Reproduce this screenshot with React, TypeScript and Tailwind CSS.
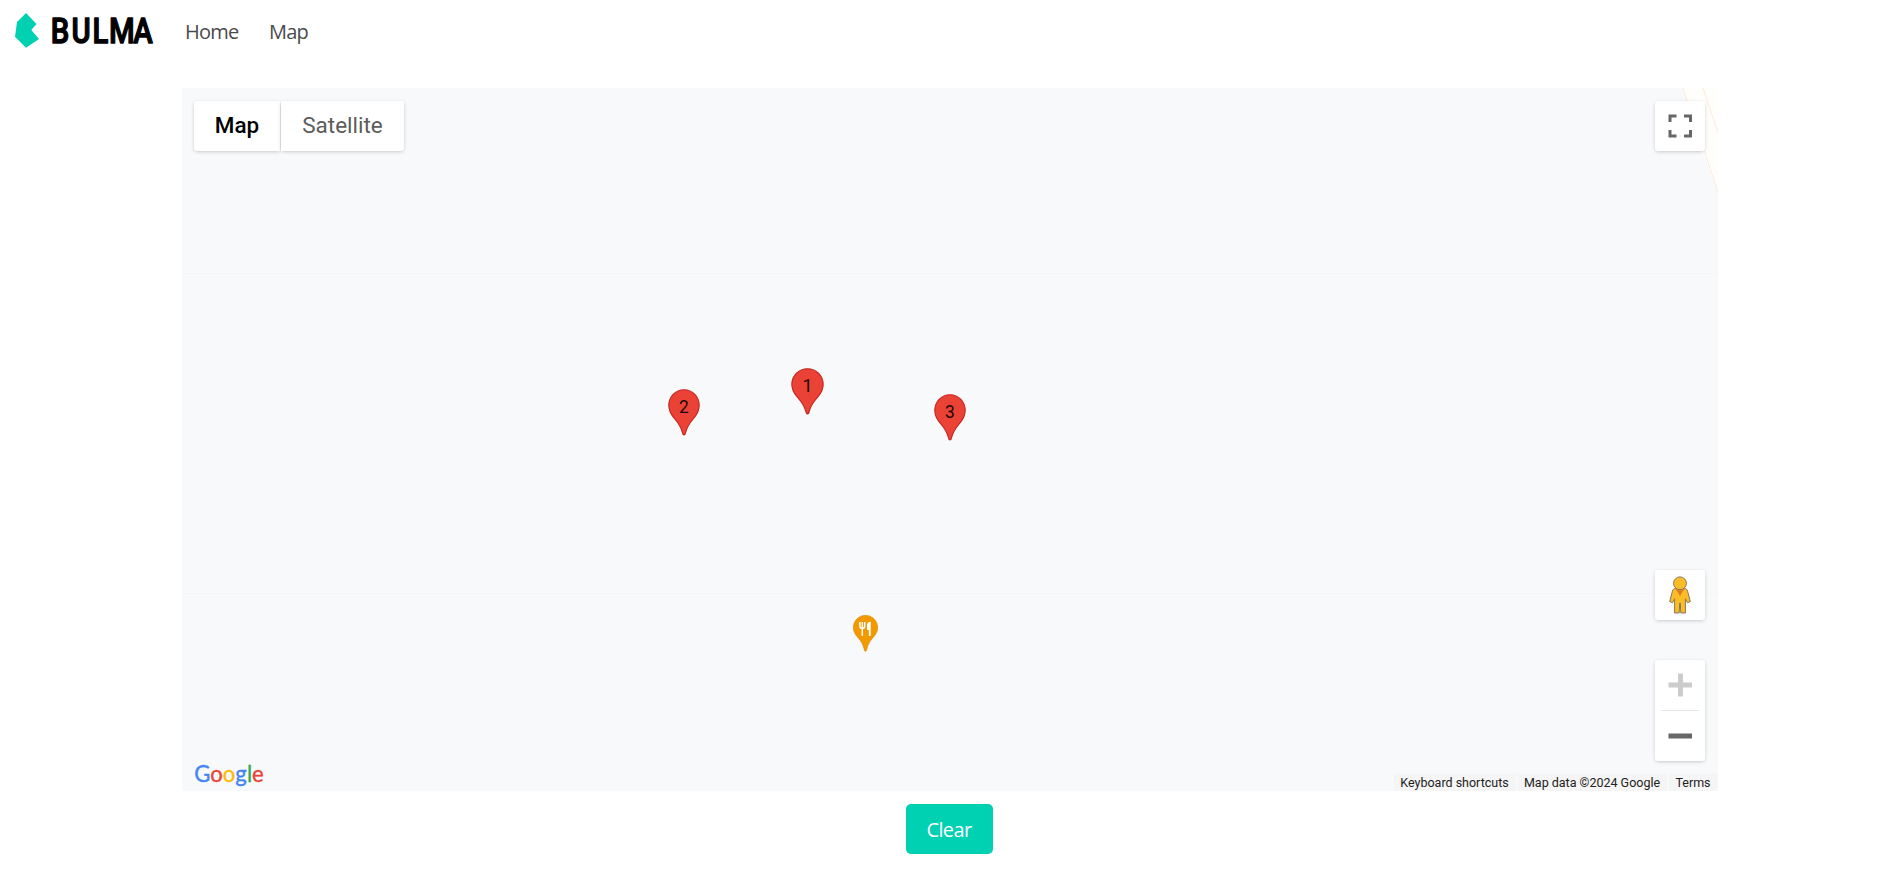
import type { ReactNode } from "react";

function BulmaLogo() {
  return (
    <svg width="165" height="60" viewBox="0 0 165 60" className="block" role="img" aria-label="Bulma">
      <path d="M26 13L36.5 24L31.3 30L39 39L26 47.7L15 36.7L17 22Z" fill="#00d1b2" />
      <text
        x="59.8 84.1 108.8 128.2 156.9"
        y="42.8"
        transform="scale(.85 1)"
        fill="#000"
        stroke="#000"
        strokeWidth="1.3"
        strokeLinejoin="round"
        className="font-[Roboto,sans-serif] text-[34.5px] font-medium"
      >
        BULMA
      </text>
    </svg>
  );
}

function Navbar() {
  return (
    <nav className="flex h-[65px] bg-white pb-0.5 text-[20px] leading-[30px] tracking-[-0.04em] text-[#4a4a4a]">
      <a className="block w-[170px]">
        <BulmaLogo />
      </a>
      <a className="flex w-[84px] items-center pl-[15px]">Home</a>
      <a className="flex items-center px-[15px]">Map</a>
    </nav>
  );
}

const shadow = "shadow-[0_1px_4px_-1px_rgba(0,0,0,0.3)]";

function PinShape({ left, top, width, label }: { left: string; top: string; width: number; label: string }) {
  return (
    <div className={`absolute ${left} ${top}`}>
      <svg width={width} height="47" viewBox="0 0 33 47" preserveAspectRatio="none">
        <path
          d="M16.5 .8C7.6.8.8 7.7.8 16.3c0 4.7 1.9 8.5 4.9 12 3.6 4.2 7.5 8.1 9 14.9.4 2 .7 2.8 1.8 2.8s1.4-.8 1.8-2.8c1.5-6.8 5.4-10.7 9-14.9 3-3.5 4.9-7.3 4.9-12C32.200 7.700 25.400.8 16.500.8Z"
          fill="#ea4335"
          stroke="#c5221f"
          strokeWidth="1.1"
        />
        <text x="16.500" y="24" textAnchor="middle" fill="#1d0705" className="font-[Roboto,sans-serif] text-[18px]">
          {label}
        </text>
      </svg>
    </div>
  );
}

function RestaurantPin() {
  return (
    <svg className="absolute left-[671px] top-[527px]" width="25" height="37" viewBox="0 0 25 37">
      <path
        d="M12.500.4C5.700.4.4 5.800.4 12.500c0 3.800 1.600 6.600 3.900 9.300 2.800 3.300 5.500 6.300 6.700 11.800.3 1.600.5 2.700 1.500 2.700s1.200-1.100 1.500-2.700c1.200-5.500 3.900-8.500 6.700-11.800 2.300-2.700 3.900-5.500 3.900-9.300C24.600 5.800 19.300.4 12.500.4Z"
        fill="#f29900"
        stroke="#e08a00"
        strokeWidth=".7"
      />
      <path
        d="M6.900 7v4.200c0 1.500 1 2.300 2.400 2.300s2.400-.8 2.400-2.300V7M9.300 7v14"
        fill="none"
        stroke="#fff"
        strokeWidth="1.500"
      />
      <path d="M14 10.500c0-2.400 1-3.800 3.700-3.800V21h-1.900v-6H14Z" fill="#fff" />
    </svg>
  );
}

function Pegman() {
  return (
    <svg width="24" height="38" viewBox="0 0 24 38" className="mr-px">
      <path
        d="M7.500 12.500h9c1.700 0 2.700 1 3.100 2.700l2.700 10.300-2.800 1.300-2.100-4V37h-4.600l-.5-10h-.6l-.5 10H6.600V22.800l-2.100 4-2.800-1.300 2.700-10.300c.4-1.700 1.400-2.700 3.100-2.700Z"
        fill="#fbbc24"
        stroke="#837865"
        strokeWidth="1"
      />
      <path d="M7.600 12.800h8.800L12 20Z" fill="#e37c22" />
      <circle cx="12" cy="7.300" r="6.400" fill="#fbbc24" stroke="#837865" strokeWidth="1" />
    </svg>
  );
}

function GoogleWordmark() {
  return (
    <svg width="80" height="34" viewBox="0 0 80 34" className="block">
      <text
        x=".3"
        y="25"
        textLength="69.5"
        lengthAdjust="spacingAndGlyphs"
        strokeWidth=".4"
        className="font-[Lato,sans-serif] text-[24px]"
      >
        <tspan fill="#4285f4" stroke="#4285f4">G</tspan>
        <tspan fill="#ea4335" stroke="#ea4335">o</tspan>
        <tspan fill="#fbbc05" stroke="#fbbc05">o</tspan>
        <tspan fill="#4285f4" stroke="#4285f4">g</tspan>
        <tspan fill="#34a853" stroke="#34a853">l</tspan>
        <tspan fill="#ea4335" stroke="#ea4335">e</tspan>
      </text>
    </svg>
  );
}

function Notice({ width, children }: { width: string; children: ReactNode }) {
  return (
    <span className={`flex h-[17px] ${width} items-center justify-center whitespace-nowrap bg-[#f5f5f5] pr-px`}>
      {children}
    </span>
  );
}

function MapCanvas() {
  return (
    <section className="relative h-[703px] w-[1536px] overflow-hidden bg-[#f8f9fb] font-[Roboto,sans-serif]">
      <svg className="absolute inset-0" width="1536" height="703" viewBox="0 0 1536 703">
        <path d="M1501 0H1536V104L1520 63Z" fill="#fffefb" />
        <path d="M1501 0L1536 104M1521 0L1536 45" fill="none" stroke="#fdebdc" strokeWidth="1" />
        <path d="M0 185.500H1536M0 505.500H1536" stroke="#f4f5f5" />
      </svg>

      <PinShape left="left-[486px]" top="top-[300.500px]" width={32} label="2" />
      <PinShape left="left-[609px]" top="top-[279.500px]" width={33} label="1" />
      <PinShape left="left-[752px]" top="top-[305.500px]" width={32} label="3" />
      <RestaurantPin />

      <div className="absolute inset-0 flex justify-between">
        <div className="flex flex-col justify-between pl-3 pt-[13px]">
          <div className="flex text-[22.5px] leading-[48px]">
            <button className={`h-[50px] w-[86px] rounded-l-[3px] bg-white pb-0.5 font-medium text-black ${shadow}`}>
              Map
            </button>
            <button className={`ml-px h-[50px] w-[123px] rounded-r-[3px] bg-white pb-0.5 text-[#5c5c5c] ${shadow}`}>
              Satellite
            </button>
          </div>
          <GoogleWordmark />
        </div>

        <div className="flex flex-col items-end justify-between pt-[13px]">
          <button className={`mr-[13px] flex h-[50px] w-[50px] items-center justify-center rounded-[3px] bg-white ${shadow}`}>
            <svg width="24" height="24" viewBox="0 0 24 24">
              <path
                d="M2 8V2H8.500M16 2h6.500V8M22.500 16v6H16M8.500 22H2V16"
                fill="none"
                stroke="#666"
                strokeWidth="3"
              />
            </svg>
          </button>
          <div className="flex flex-col items-end">
            <button className={`mr-[13px] flex h-[50px] w-[50px] items-center justify-center rounded-[3px] bg-white ${shadow}`}>
              <Pegman />
            </button>
            <div className={`mr-[13px] mt-10 flex h-[101px] w-[50px] flex-col items-center rounded-[3px] bg-white ${shadow}`}>
              <button className="flex h-[50px] items-center justify-center">
                <svg width="24" height="24" viewBox="0 0 24 24">
                  <path d="M12.500 .5v23M.5 12h24" stroke="#ccc" strokeWidth="5" />
                </svg>
              </button>
              <div className="h-px w-[38px] bg-[#e6e6e6]" />
              <button className="flex h-[50px] items-center justify-center">
                <svg width="24" height="24" viewBox="0 0 24 24">
                  <path d="M.5 12h24" stroke="#666" strokeWidth="5" />
                </svg>
              </button>
            </div>
            <div className="mt-[13px] flex gap-0.5 text-[12.500px] leading-[17px] text-[#222]">
              <Notice width="w-[122px]">Keyboard shortcuts</Notice>
              <Notice width="w-[149px]">Map data ©2024 Google</Notice>
              <Notice width="w-[49px]">Terms</Notice>
            </div>
          </div>
        </div>
      </div>
    </section>
  );
}

export default function App() {
  return (
    <div className="h-[872px] overflow-hidden bg-white font-['Open_Sans','Noto_Sans',sans-serif]">
      <Navbar />
      <main className="flex flex-col items-center pt-[23px]">
        <div className="ml-[6px]">
          <MapCanvas />
        </div>
        <button className="ml-1 mt-[13px] h-[50px] w-[87px] rounded-[5px] bg-[#00d1b2] pt-0.5 text-[20px] tracking-[-0.03em] text-white">
          Clear
        </button>
      </main>
    </div>
  );
}
